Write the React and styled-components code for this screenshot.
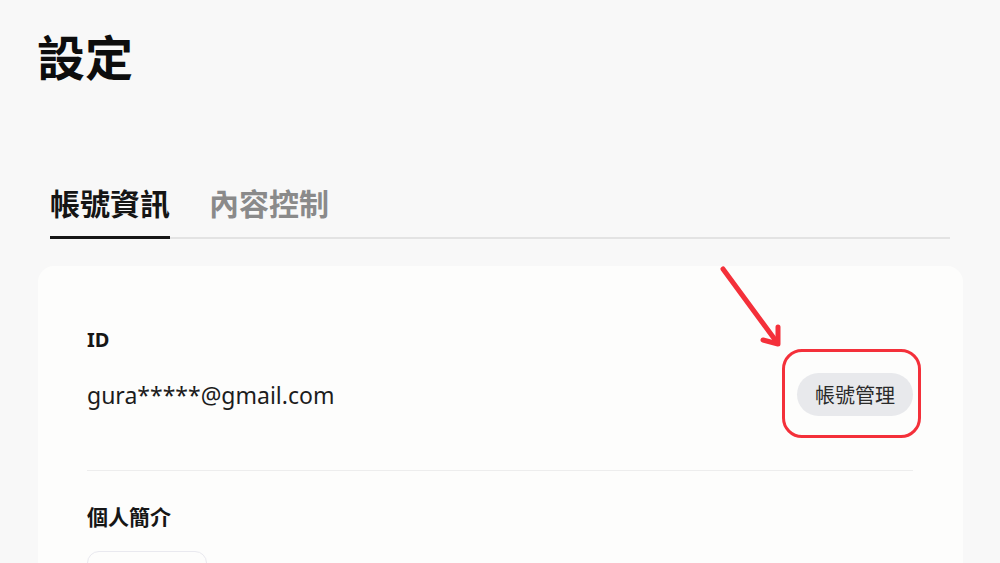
import React from 'react';
import styled, { createGlobalStyle } from 'styled-components';

const GlobalStyle = createGlobalStyle`
  html, body {
    margin: 0;
    padding: 0;
    background: #f8f8f8;
    font-family: "Noto Sans", "Noto Sans CJK TC", sans-serif;
    color: #111;
    overflow: hidden;
  }
`;

const Page = styled.div`
  width: 1000px;
  height: 563px;
  padding: 0 37px 0 38px;
  box-sizing: border-box;
  position: relative;
  overflow: hidden;
`;

const Title = styled.h1`
  margin: 0 0 0 -1px;
  padding-top: 21px;
  font-size: 48px;
  line-height: 68px;
  font-weight: 700;
  font-family: "Noto Sans CJK TC", sans-serif;
  color: #0d0d0d;
`;

const Tabs = styled.div`
  display: flex;
  gap: 39px;
  margin: 91px 13px 0 12px;
  border-bottom: 2px solid #e3e3e3;
`;

const Tab = styled.div`
  font-family: "Noto Sans CJK TC", sans-serif;
  font-size: 30px;
  font-weight: 700;
  line-height: 44px;
  padding-bottom: 12px;
  margin-bottom: -2px;
  color: ${p => (p.active ? '#151515' : '#8a8a8a')};
  border-bottom: 3px solid ${p => (p.active ? '#161616' : 'transparent')};
`;

const Card = styled.div`
  margin-top: 27px;
  background: #fdfdfc;
  border-radius: 16px;
  padding: 58px 50px 0 49px;
  height: 400px;
`;

const Label = styled.div`
  font-family: "Noto Sans", "Noto Sans CJK TC", sans-serif;
  font-size: ${p => p.size || 20}px;
  font-weight: 700;
  line-height: 32px;
  color: #161616;
`;

const Row = styled.div`
  display: flex;
  align-items: center;
  justify-content: space-between;
  margin-top: 17px;
  padding-bottom: 54px;
  border-bottom: 1.5px solid #ededed;
`;

const Value = styled.div`
  font-family: "Noto Sans", sans-serif;
  font-size: 23px;
  color: #1c1c1c;
`;

const ButtonWrap = styled.div`
  position: relative;
  display: flex;
`;

const PillButton = styled.button`
  border: none;
  background: #e8e9ec;
  border-radius: 22px;
  height: 43px;
  padding: 0 18px;
  font-family: "Noto Sans CJK TC", sans-serif;
  font-size: 20px;
  color: #2a2a2a;
  cursor: pointer;
`;

const Highlight = styled.div`
  position: absolute;
  left: -15px;
  right: -8px;
  top: -24px;
  bottom: -22px;
  border: 3px solid #f4303a;
  border-radius: 20px;
  pointer-events: none;
`;

const Arrow = styled.svg`
  position: absolute;
  left: 712px;
  top: 260px;
  pointer-events: none;
`;

const Section = styled.div`
  margin-top: 30px;
`;

const EmptyBox = styled.div`
  margin-top: 18px;
  width: 118px;
  height: 40px;
  border: 1.5px solid #e9e9ef;
  border-radius: 12px;
`;

const App = () => {
  return (
    <Page>
      <GlobalStyle />
      <Title>設定</Title>
      <Tabs>
        <Tab active>帳號資訊</Tab>
        <Tab>內容控制</Tab>
      </Tabs>
      <Card>
        <Label>ID</Label>
        <Row>
          <Value>gura*****@gmail.com</Value>
          <ButtonWrap>
            <PillButton>帳號管理</PillButton>
            <Highlight />
          </ButtonWrap>
        </Row>
        <Section>
          <Label size={21}>個人簡介</Label>
          <EmptyBox />
        </Section>
      </Card>
      <Arrow width="80" height="95" viewBox="0 0 80 95">
        <path d="M11 9 L64 81" stroke="#f4303a" strokeWidth="5" strokeLinecap="round" fill="none" />
        <path d="M66 67 L66 84 L51 80" stroke="#f4303a" strokeWidth="5" strokeLinecap="round" strokeLinejoin="round" fill="none" />
      </Arrow>
    </Page>
  );
};

export default App;
